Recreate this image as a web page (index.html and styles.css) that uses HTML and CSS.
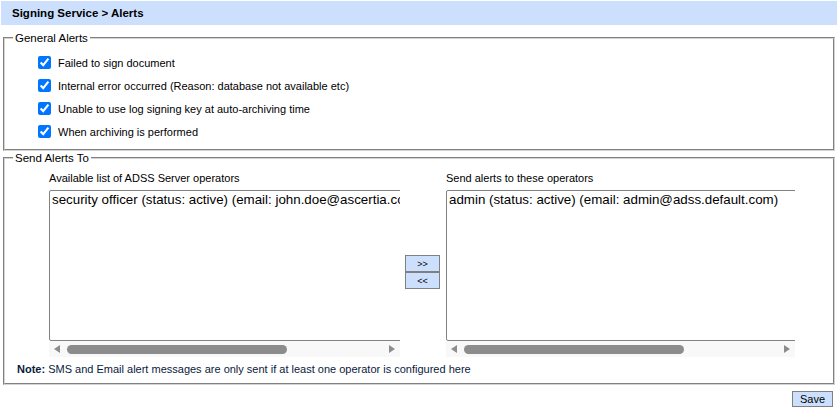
FILE: index.html
```html
<!DOCTYPE html>
<html lang="en">
<head>
  <meta charset="UTF-8">
  <title>Signing Service - Alerts</title>
  <link rel="stylesheet" href="styles.css">
</head>
<body>
<div class="header">Signing Service &gt; Alerts</div>

<fieldset class="group first">
  <legend>General Alerts</legend>
  <div class="checks">
    <label><input type="checkbox" checked> Failed to sign document</label>
    <label><input type="checkbox" checked> Internal error occurred (Reason: database not available etc)</label>
    <label><input type="checkbox" checked> Unable to use log signing key at auto-archiving time</label>
    <label><input type="checkbox" checked> When archiving is performed</label>
  </div>
</fieldset>

<fieldset class="group">
  <legend>Send Alerts To</legend>
  <div class="operators">
    <div class="column">
      <div class="caption">Available list of ADSS Server operators</div>
      <div class="listBox">
        <div class="listWrap">
          <select multiple size="9">
            <option>security officer (status: active) (email: john.doe@ascertia.com)</option>
          </select>
        </div>
        <div class="hscroll">
          <span class="arrow left"></span>
          <div class="track"><div class="thumb"></div></div>
          <span class="arrow right"></span>
        </div>
      </div>
    </div>
    <div class="moveButtons">
      <button type="button">&gt;&gt;</button>
      <button type="button">&lt;&lt;</button>
    </div>
    <div class="column">
      <div class="caption">Send alerts to these operators</div>
      <div class="listBox narrow">
        <div class="listWrap">
          <select multiple size="9">
            <option>admin (status: active) (email: admin@adss.default.com)</option>
          </select>
        </div>
        <div class="hscroll">
          <span class="arrow left"></span>
          <div class="track"><div class="thumb"></div></div>
          <span class="arrow right"></span>
        </div>
      </div>
    </div>
  </div>
  <div class="note"><b>Note:</b> SMS and Email alert messages are only sent if at least one operator is configured here</div>
</fieldset>

<div class="actions">
  <button type="button" class="save">Save</button>
</div>
</body>
</html>
```

FILE: styles.css
```css
body {
  margin: 1px;
  font-family: 'Liberation Sans', Arial, sans-serif;
  font-size: 11px;
  color: #000;
  background: #fff;
}

.header {
  height: 24px;
  line-height: 25px;
  padding-left: 11px;
  background-color: #cce0fd;
  font-weight: bold;
  font-size: 11.5px;
}

fieldset.group {
  margin: 0 2px;
  padding: 0;
  border: 2px groove #d4d4d4;
}

fieldset.first {
  margin-top: 6px;
}

fieldset.group legend {
  margin-left: 8px;
  padding: 0 2px;
  font-size: 11.5px;
  line-height: 14px;
}

.checks {
  padding: 6px 0 6px 33px;
}

.checks label {
  display: flex;
  align-items: center;
  height: 23px;
}

.checks input {
  margin: 0 7px 0 0;
  width: 13px;
  height: 13px;
}

.operators {
  display: flex;
  align-items: flex-start;
  padding: 6px 0 0 44px;
}

.caption {
  height: 14px;
  line-height: 14px;
  margin-bottom: 5px;
}

.listBox {
  width: 351px;
}

.listBox.narrow {
  width: 349px;
}

.listWrap {
  overflow: hidden;
}

.listWrap select {
  display: block;
  width: 506px;
  height: 151px;
  margin: 0;
  padding: 1px 0;
  border: 1px solid #828282;
  font-family: 'Liberation Sans', Arial, sans-serif;
  font-size: 13.33px;
  outline: none;
}

.listWrap option {
  padding: 0 2px;
}

/* fake horizontal scrollbar, the real one is hidden in screenshots */
.hscroll {
  display: flex;
  align-items: center;
  height: 16px;
  background-color: #f8f8f8;
}

.hscroll .track {
  flex: 1;
}

.hscroll .thumb {
  width: 220px;
  height: 9px;
  margin-left: 1px;
  border-radius: 5px;
  background-color: #8c8c8c;
}

.arrow {
  width: 17px;
  height: 8px;
  position: relative;
}

.arrow::before {
  content: "";
  position: absolute;
  top: 0;
  border-top: 4px solid transparent;
  border-bottom: 4px solid transparent;
}

.arrow.left::before {
  left: 5px;
  border-right: 6px solid #8c8c8c;
}

.arrow.right::before {
  left: 6px;
  border-left: 6px solid #8c8c8c;
}

.moveButtons {
  display: flex;
  flex-direction: column;
  margin: 84px 6px 0 5px;
}

.moveButtons button {
  width: 35px;
  height: 17px;
  margin: 0;
  padding: 0;
  border: 1px solid #808080;
  background-color: #cce0fd;
  font-family: 'Liberation Sans', Arial, sans-serif;
  font-size: 9px;
  line-height: 14px;
}

.note {
  padding: 6px 0 8px 12px;
  color: #0a1a3c;
}

.actions {
  display: flex;
  justify-content: flex-end;
  padding: 6px 4px 0 0;
}

.save {
  width: 41px;
  height: 16px;
  padding: 0;
  border: 1px solid #808080;
  background-color: #cce0fd;
  font-family: 'Liberation Sans', Arial, sans-serif;
  font-size: 11px;
}
```
